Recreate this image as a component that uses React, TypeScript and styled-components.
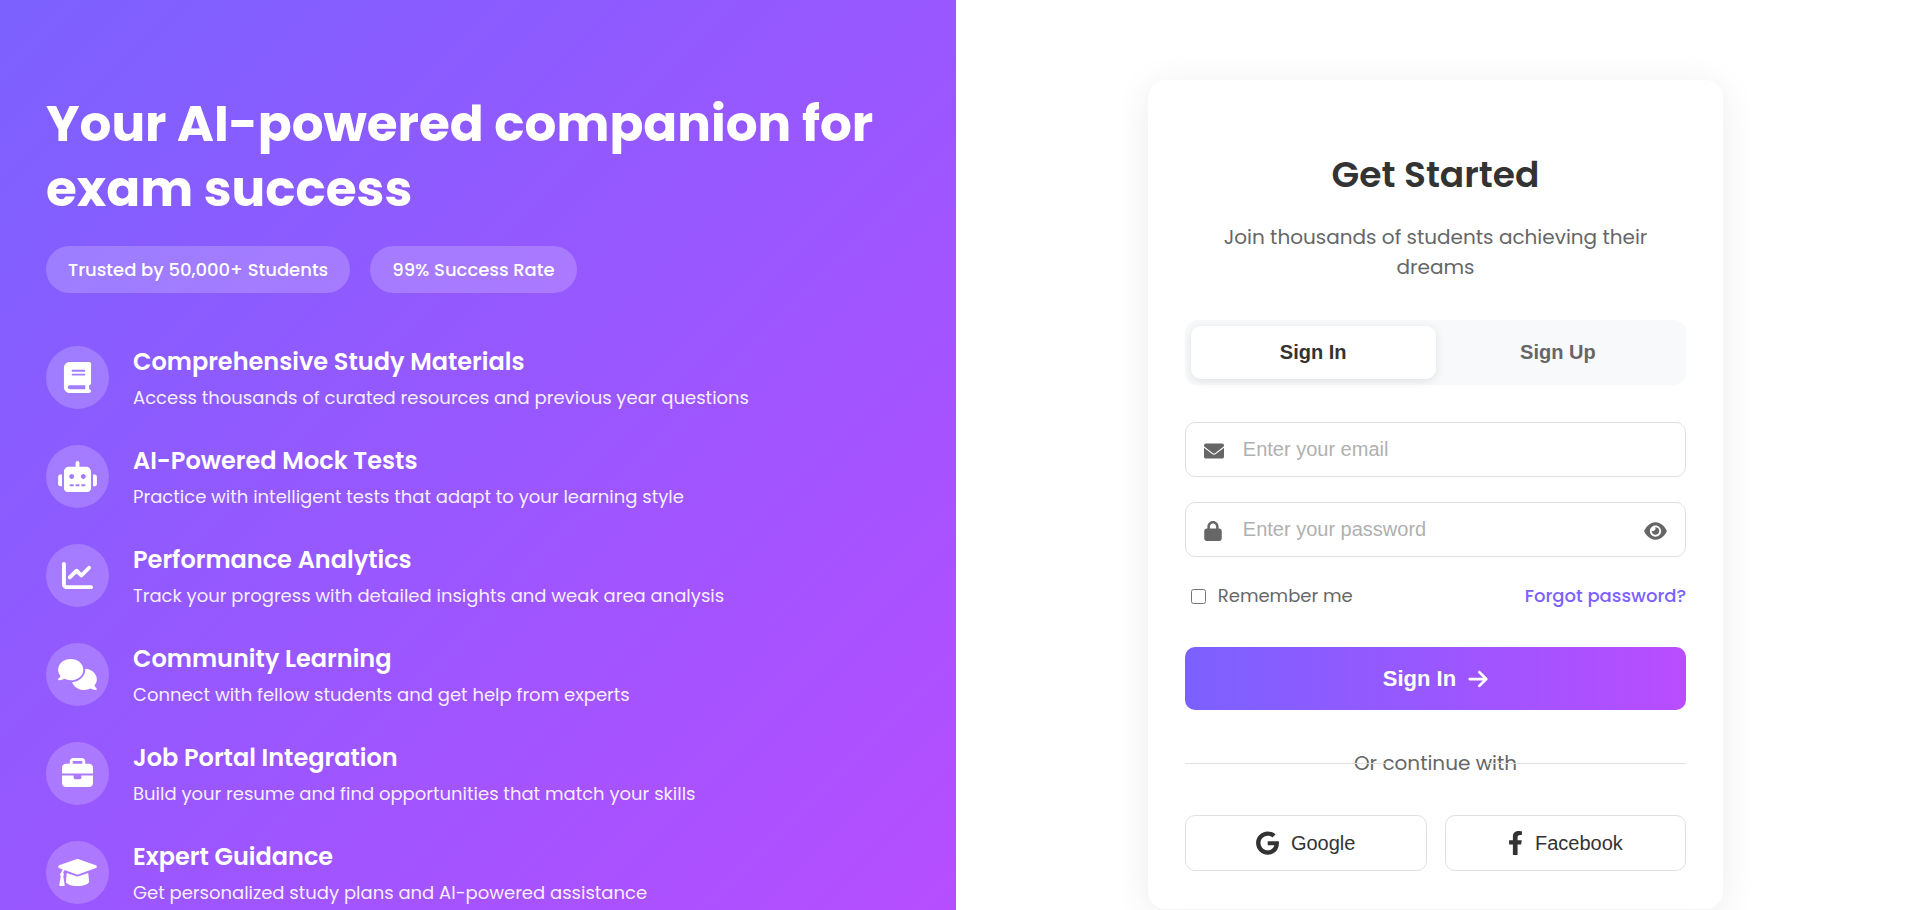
import React, { useState } from 'react';
import styled, { createGlobalStyle } from 'styled-components';
import { FaGoogle, FaFacebookF } from 'react-icons/fa';
import { FaBook, FaChartLine, FaComments, FaBriefcase, FaLock, FaArrowRight } from 'react-icons/fa6';

const GlobalStyle = createGlobalStyle`
  *, *::before, *::after { box-sizing: border-box; }
  body {
    margin: 0;
    background: #fff;
    color: #333;
    font-family: Poppins, Inter, "Open Sans", sans-serif;
  }
  h1, h2, h3, p, ul { margin: 0; padding: 0; }
  button, input { font-family: "Liberation Sans", Arial, sans-serif; }
`;

const Glyph = styled.span<{ $width: number; $height: number }>`
  display: flex;
  flex: none;
  svg {
    width: ${(p) => p.$width}px;
    height: ${(p) => p.$height}px;
  }
`;

const Page = styled.main`
  display: grid;
  grid-template-columns: 956fr 959fr;
  min-height: 100vh;
`;

const Hero = styled.section`
  padding: 91px 46px 0;
  color: #fff;
  background: linear-gradient(135deg, #7b61ff 0%, #b84dff 100%);
`;

const HeroTitle = styled.h1`
  font-size: 50px;
  line-height: 65px;
  font-weight: 700;
`;

const Badges = styled.div`
  display: flex;
  gap: 20px;
  margin-top: 25px;
`;

const Badge = styled.span`
  padding: 0 22px;
  border-radius: 24px;
  background: rgba(255, 255, 255, 0.2);
  font-size: 18px;
  line-height: 47px;
  font-weight: 500;
  white-space: nowrap;
`;

const FeatureList = styled.ul`
  display: grid;
  gap: 32px;
  margin-top: 53px;
  list-style: none;
`;

const Feature = styled.li`
  display: flex;
  align-items: flex-start;
  gap: 24px;
`;

const FeatureIcon = styled.span`
  display: flex;
  align-items: center;
  justify-content: center;
  flex: none;
  width: 63px;
  height: 63px;
  border-radius: 50%;
  background: rgba(255, 255, 255, 0.2);
`;

const FeatureTitle = styled.h3`
  font-size: 24px;
  line-height: 32px;
  font-weight: 600;
`;

const FeatureText = styled.p`
  margin-top: 5px;
  font-size: 18px;
  line-height: 30px;
  opacity: 0.9;
`;

const AuthPanel = styled.section`
  display: flex;
  justify-content: center;
  align-items: flex-start;
  padding: 80px 0;
`;

const Card = styled.div`
  width: 60%;
  padding: 71px 37px 38px;
  border-radius: 18px;
  background: #fff;
  box-shadow: 0 6px 36px rgba(0, 0, 0, 0.08);
`;

const CardTitle = styled.h2`
  text-align: center;
  font-size: 36px;
  line-height: 48px;
  font-weight: 600;
`;

const CardSubtitle = styled.p`
  margin-top: 23px;
  padding: 0 24px;
  text-align: center;
  color: #666;
  font-size: 20px;
  line-height: 30px;
`;

const Tabs = styled.div`
  display: flex;
  margin-top: 38px;
  padding: 6px;
  border-radius: 12px;
  background: #f8f9fb;
`;

const Tab = styled.button<{ $active: boolean }>`
  flex: 1;
  height: 53px;
  border: 0;
  border-radius: 10px;
  background: ${(p) => (p.$active ? '#fff' : 'transparent')};
  box-shadow: ${(p) => (p.$active ? '0 2px 10px rgba(0, 0, 0, 0.1)' : 'none')};
  color: ${(p) => (p.$active ? '#333' : '#666')};
  font-size: 20px;
  font-weight: 600;
  cursor: pointer;
`;

const Form = styled.form`
  display: flex;
  flex-direction: column;
  gap: 25px;
  margin-top: 37px;
`;

const Field = styled.label`
  display: flex;
  align-items: center;
  height: 55px;
  padding: 0 18px;
  border: 1px solid #e0e0e0;
  border-radius: 10px;
  color: #666;
`;

const FieldIcon = styled.span`
  width: 39px;
  padding-top: 3px;
`;

const FieldInput = styled.input`
  flex: 1;
  min-width: 0;
  height: 100%;
  padding: 0;
  border: 0;
  outline: 0;
  background: transparent;
  color: #333;
  font-size: 20px;
  &::placeholder { color: #b0b0b0; opacity: 1; }
`;

const RevealButton = styled.button`
  padding: 3px 0 0;
  border: 0;
  background: none;
  color: #666;
  cursor: pointer;
`;

const Options = styled.div`
  display: flex;
  justify-content: space-between;
  align-items: center;
  font-size: 18px;
  line-height: 28px;
`;

const Remember = styled.label`
  display: flex;
  align-items: center;
  gap: 12px;
  padding-left: 6px;
  color: #666;
`;

const Checkbox = styled.input`
  width: 15px;
  height: 15px;
  margin: 0;
`;

const ForgotLink = styled.a`
  color: #7b61ff;
  font-weight: 500;
  text-decoration: none;
`;

const SubmitButton = styled.button`
  display: flex;
  align-items: center;
  justify-content: center;
  gap: 12px;
  height: 63px;
  margin-top: 12px;
  border: 0;
  border-radius: 10px;
  background: linear-gradient(90deg, #7b61ff 0%, #b84dff 100%);
  color: #fff;
  font-size: 22px;
  font-weight: 600;
  cursor: pointer;
`;

const Divider = styled.div`
  position: relative;
  margin-top: 38px;
  text-align: center;
  color: #666;
  font-size: 20px;
  line-height: 30px;
  &::before,
  &::after {
    content: '';
    position: absolute;
    top: 50%;
    width: 40%;
    height: 1px;
    background: #e0e0e0;
  }
  &::before { left: 0; }
  &::after { right: 0; }
`;

const SocialRow = styled.div`
  display: flex;
  gap: 18px;
  margin-top: 37px;
`;

const SocialButton = styled.button`
  display: flex;
  flex: 1;
  align-items: center;
  justify-content: center;
  gap: 12px;
  height: 56px;
  border: 1px solid #e0e0e0;
  border-radius: 10px;
  background: #fff;
  color: #333;
  font-size: 20px;
  cursor: pointer;
`;

const RobotIcon = () => (
  <svg viewBox="0 0 640 512" fill="currentColor" aria-hidden="true">
    <path d="M9.375 233.4C3.375 239.4 0 247.5 0 256v128c0 8.5 3.375 16.62 9.375 22.62S23.5 416 32 416h32V224H32C23.5 224 15.38 227.4 9.375 233.4zM464 96H352V32c0-17.62-14.38-32-32-32S288 14.38 288 32v64H176C131.8 96 96 131.8 96 176V448c0 35.38 28.62 64 64 64h320c35.38 0 64-28.62 64-64V176C544 131.8 508.3 96 464 96zM256 416H192v-32h64V416zM224 296C201.9 296 184 278.1 184 256S201.9 216 224 216S264 233.9 264 256S246.1 296 224 296zM352 416H288v-32h64V416zM448 416h-64v-32h64V416zM416 296c-22.12 0-40-17.88-40-40S393.9 216 416 216S456 233.9 456 256S438.1 296 416 296zM630.6 233.4C624.6 227.4 616.5 224 608 224h-32v192h32c8.5 0 16.62-3.375 22.62-9.375S640 392.5 640 384V256C640 247.5 636.6 239.4 630.6 233.4z" />
  </svg>
);

const GraduationCapIcon = () => (
  <svg viewBox="0 0 640 512" fill="currentColor" aria-hidden="true">
    <path d="M623.1 136.9l-282.7-101.2c-13.73-4.91-28.7-4.91-42.43 0L16.05 136.9C6.438 140.4 0 149.6 0 160s6.438 19.65 16.05 23.09L76.07 204.6c-11.89 15.8-20.26 34.16-24.55 53.95C40.05 263.4 32 274.8 32 288c0 9.953 4.814 18.49 11.94 24.36l-24.83 149C17.48 471.1 25 480 34.89 480H93.11c9.887 0 17.41-8.879 15.78-18.63l-24.83-149C91.19 306.5 96 297.1 96 288c0-10.29-5.174-19.03-12.72-24.89c4.252-17.76 12.88-33.82 24.94-47.03l190.6 68.23c13.73 4.91 28.7 4.91 42.43 0l282.7-101.2C633.6 179.6 640 170.4 640 160S633.6 140.4 623.1 136.9zM351.1 314.4C341.7 318.5 330.9 320 320 320c-10.92 0-21.69-1.867-32-5.555L142.8 262.5L128 405.3C128 446.6 213.1 480 320 480c105.1 0 192-33.4 192-74.67l-14.78-142.9L351.1 314.4z" />
  </svg>
);

const EnvelopeIcon = () => (
  <svg viewBox="0 0 512 512" fill="currentColor" aria-hidden="true">
    <path d="M256 352c-16.53 0-33.06-5.422-47.16-16.41L0 173.2V400C0 426.5 21.49 448 48 448h416c26.51 0 48-21.49 48-48V173.2l-208.8 162.5C289.1 346.6 272.5 352 256 352zM16.29 145.3l212.2 165.1c16.19 12.6 38.87 12.6 55.06 0l212.2-165.1C505.1 137.3 512 125 512 112C512 85.49 490.5 64 464 64h-416C21.49 64 0 85.49 0 112C0 125 6.01 137.3 16.29 145.3z" />
  </svg>
);

const EyeIcon = () => (
  <svg viewBox="0 0 576 512" fill="currentColor" aria-hidden="true">
    <path d="M279.6 160.4C282.4 160.1 285.2 160 288 160C341 160 384 202.1 384 256C384 309 341 352 288 352C234.1 352 192 309 192 256C192 253.2 192.1 250.4 192.4 247.6C201.7 252.1 212.5 256 224 256C259.3 256 288 227.3 288 192C288 180.5 284.1 169.7 279.6 160.4zM480.6 112.6C527.4 156 558.7 207.1 573.5 243.7C576.8 251.6 576.8 260.4 573.5 268.3C558.7 304 527.4 355.1 480.6 399.4C433.5 443.2 368.8 480 288 480C207.2 480 142.5 443.2 95.42 399.4C48.62 355.1 17.34 304 2.461 268.3C-.8205 260.4-.8205 251.6 2.461 243.7C17.34 207.1 48.62 156 95.42 112.6C142.5 68.84 207.2 32 288 32C368.8 32 433.5 68.84 480.6 112.6V112.6zM288 112C208.5 112 144 176.5 144 256C144 335.5 208.5 400 288 400C367.5 400 432 335.5 432 256C432 176.5 367.5 112 288 112z" />
  </svg>
);

const features = [
  { icon: FaBook, title: 'Comprehensive Study Materials', text: 'Access thousands of curated resources and previous year questions' },
  { icon: RobotIcon, title: 'AI-Powered Mock Tests', text: 'Practice with intelligent tests that adapt to your learning style' },
  { icon: FaChartLine, title: 'Performance Analytics', text: 'Track your progress with detailed insights and weak area analysis' },
  { icon: FaComments, title: 'Community Learning', text: 'Connect with fellow students and get help from experts' },
  { icon: FaBriefcase, title: 'Job Portal Integration', text: 'Build your resume and find opportunities that match your skills' },
  { icon: GraduationCapIcon, title: 'Expert Guidance', text: 'Get personalized study plans and AI-powered assistance' },
];

export default function App() {
  const [tab, setTab] = useState<'in' | 'up'>('in');
  const [visible, setVisible] = useState(false);

  return (
    <>
      <GlobalStyle />
      <Page>
        <Hero>
          <HeroTitle>Your AI-powered companion for exam success</HeroTitle>
          <Badges>
            <Badge>Trusted by 50,000+ Students</Badge>
            <Badge>99% Success Rate</Badge>
          </Badges>
          <FeatureList>
            {features.map(({ icon: Icon, title, text }) => (
              <Feature key={title}>
                <FeatureIcon>
                  <Glyph $width={39} $height={31}><Icon /></Glyph>
                </FeatureIcon>
                <div>
                  <FeatureTitle>{title}</FeatureTitle>
                  <FeatureText>{text}</FeatureText>
                </div>
              </Feature>
            ))}
          </FeatureList>
        </Hero>
        <AuthPanel>
          <Card>
            <CardTitle>Get Started</CardTitle>
            <CardSubtitle>Join thousands of students achieving their dreams</CardSubtitle>
            <Tabs>
              <Tab type="button" $active={tab === 'in'} onClick={() => setTab('in')}>Sign In</Tab>
              <Tab type="button" $active={tab === 'up'} onClick={() => setTab('up')}>Sign Up</Tab>
            </Tabs>
            <Form onSubmit={(e) => e.preventDefault()}>
              <Field>
                <FieldIcon><Glyph $width={20} $height={20}><EnvelopeIcon /></Glyph></FieldIcon>
                <FieldInput type="email" placeholder="Enter your email" aria-label="Email" />
              </Field>
              <Field>
                <FieldIcon><Glyph $width={18} $height={20}><FaLock /></Glyph></FieldIcon>
                <FieldInput type={visible ? 'text' : 'password'} placeholder="Enter your password" aria-label="Password" />
                <RevealButton type="button" aria-label="Show password" onClick={() => setVisible(!visible)}>
                  <Glyph $width={23} $height={20}><EyeIcon /></Glyph>
                </RevealButton>
              </Field>
              <Options>
                <Remember>
                  <Checkbox type="checkbox" />
                  Remember me
                </Remember>
                <ForgotLink href="#forgot">Forgot password?</ForgotLink>
              </Options>
              <SubmitButton type="submit">
                Sign In
                <Glyph $width={20} $height={22}><FaArrowRight /></Glyph>
              </SubmitButton>
            </Form>
            <Divider>Or continue with</Divider>
            <SocialRow>
              <SocialButton type="button">
                <Glyph $width={23} $height={24}><FaGoogle /></Glyph>
                Google
              </SocialButton>
              <SocialButton type="button">
                <Glyph $width={15} $height={24}><FaFacebookF /></Glyph>
                Facebook
              </SocialButton>
            </SocialRow>
          </Card>
        </AuthPanel>
      </Page>
    </>
  );
}
